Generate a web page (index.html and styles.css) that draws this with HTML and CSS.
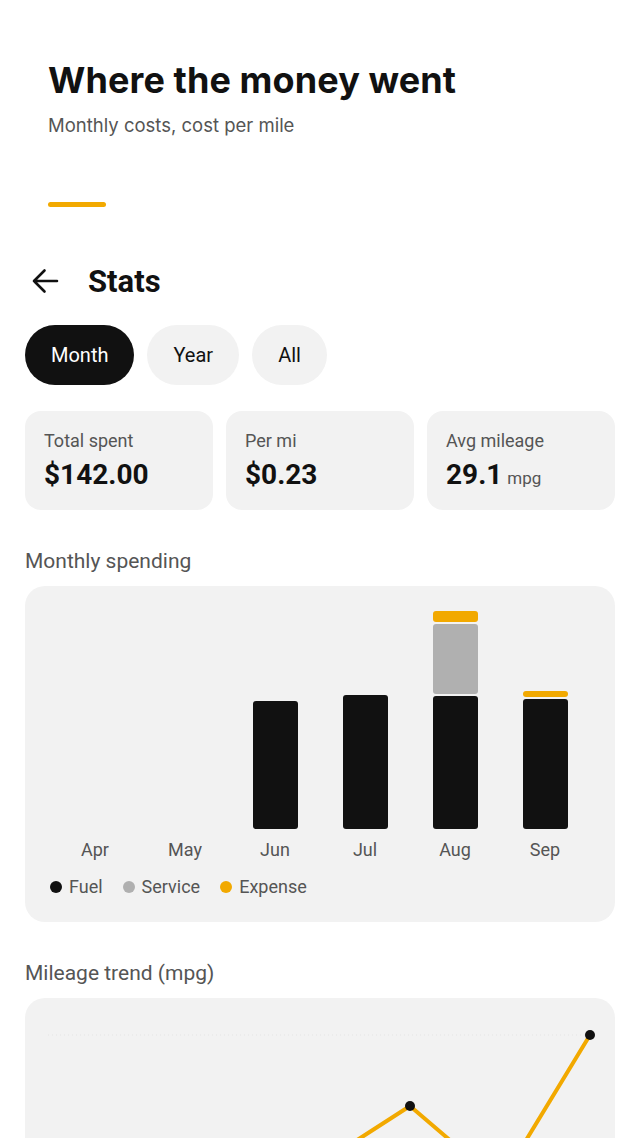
FILE: index.html
```html
<!DOCTYPE html>
<html lang="en">
    <head>
        <meta charset="UTF-8">
        <meta name="viewport" content="width=device-width, initial-scale=1.0">
        <title>Stats</title>
        <link rel="stylesheet" href="styles.css">
    </head>

    <body>
        <header class="intro">
            <h1>Where the money went</h1>
            <p class="subtitle">Monthly costs, cost per mile</p>
            <div class="accent"></div>
        </header>

        <main class="screen">
            <div class="topbar">
                <svg class="back" width="28" height="26" viewBox="0 0 28 26">
                    <path d="M26 13H3M13.5 2.5L3 13l10.5 10.5" fill="none" stroke="#111" stroke-width="2.6" stroke-linecap="round" stroke-linejoin="round"/>
                </svg>
                <h2>Stats</h2>
            </div>

            <div class="chips">
                <span class="chip active">Month</span>
                <span class="chip">Year</span>
                <span class="chip">All</span>
            </div>

            <div class="stats">
                <div class="stat">
                    <span class="label">Total spent</span>
                    <span class="value">$142.00</span>
                </div>
                <div class="stat">
                    <span class="label">Per mi</span>
                    <span class="value">$0.23</span>
                </div>
                <div class="stat">
                    <span class="label">Avg mileage</span>
                    <span class="value">29.1<small>mpg</small></span>
                </div>
            </div>

            <h3 class="section-title">Monthly spending</h3>
            <div class="card chart">
                <div class="bars">
                    <div class="col"><div class="stack"></div><span>Apr</span></div>
                    <div class="col"><div class="stack"></div><span>May</span></div>
                    <div class="col">
                        <div class="stack">
                            <div class="seg fuel" style="height: 128px"></div>
                        </div>
                        <span>Jun</span>
                    </div>
                    <div class="col">
                        <div class="stack">
                            <div class="seg fuel" style="height: 134px"></div>
                        </div>
                        <span>Jul</span>
                    </div>
                    <div class="col">
                        <div class="stack">
                            <div class="seg expense" style="height: 11px"></div>
                            <div class="seg service" style="height: 70px"></div>
                            <div class="seg fuel" style="height: 134px"></div>
                        </div>
                        <span>Aug</span>
                    </div>
                    <div class="col">
                        <div class="stack">
                            <div class="seg expense" style="height: 6px"></div>
                            <div class="seg fuel" style="height: 130px"></div>
                        </div>
                        <span>Sep</span>
                    </div>
                </div>
                <div class="legend">
                    <span><i class="dot fuel"></i>Fuel</span>
                    <span><i class="dot service"></i>Service</span>
                    <span><i class="dot expense"></i>Expense</span>
                </div>
            </div>

            <h3 class="section-title">Mileage trend (mpg)</h3>
            <div class="card trend">
                <svg width="590" height="260" viewBox="0 0 590 260">
                    <line x1="23" y1="37" x2="565" y2="37" stroke="#e4e4e4" stroke-width="1" stroke-dasharray="1 3"/>
                    <polyline points="115,210 205,190 295,166 385,108 475,185 565,37" fill="none" stroke="#f2a900" stroke-width="4" stroke-linejoin="round"/>
                    <circle cx="385" cy="108" r="5" fill="#111"/>
                    <circle cx="565" cy="37" r="5" fill="#111"/>
                    <circle cx="475" cy="185" r="5" fill="#111"/>
                </svg>
            </div>
        </main>
    </body>
</html>
```

FILE: styles.css
```css
body {
    margin: 0;
    background-color: #ffffff;
    color: #111111;
    font-family: Roboto, "Noto Sans", sans-serif;
}

.intro {
    padding: 58px 48px 0;
}

.intro h1 {
    margin: 0;
    font-family: Inter, Roboto, sans-serif;
    font-size: 36px;
    line-height: 44px;
    font-weight: 700;
    letter-spacing: 0.1px;
}

.subtitle {
    margin: 11px 0 0;
    font-family: Inter, Roboto, sans-serif;
    font-size: 18.5px;
    line-height: 24px;
    color: #555555;
}

.accent {
    width: 58px;
    height: 5px;
    margin-top: 65px;
    border-radius: 3px;
    background-color: #f2a900;
}

.screen {
    padding: 0 25px;
}

.topbar {
    display: flex;
    align-items: center;
    height: 48px;
    margin-top: 50px;
}

.back {
    margin-left: 6px;
}

.topbar h2 {
    margin: 0 0 0 29px;
    font-size: 31px;
    font-weight: 700;
}

.chips {
    display: flex;
    gap: 13px;
    margin-top: 20px;
}

.chip {
    display: flex;
    align-items: center;
    height: 60px;
    padding: 0 26px;
    border-radius: 30px;
    background-color: #f2f2f2;
    font-size: 20px;
    font-weight: 400;
}

.chip.active {
    background-color: #111111;
    color: #ffffff;
}

.stats {
    display: grid;
    grid-template-columns: repeat(3, 1fr);
    gap: 13px;
    margin-top: 26px;
}

.stat {
    display: flex;
    flex-direction: column;
    gap: 7px;
    height: 99px;
    padding: 19px 19px 0;
    box-sizing: border-box;
    border-radius: 16px;
    background-color: #f2f2f2;
}

.label {
    font-size: 18px;
    color: #555555;
}

.value {
    font-size: 28px;
    font-weight: 700;
}

.value small {
    margin-left: 5px;
    font-size: 17px;
    font-weight: 400;
    color: #555555;
}

.section-title {
    margin: 39px 0 13px;
    font-size: 21px;
    line-height: 24px;
    font-weight: 400;
    color: #555555;
}

.card {
    border-radius: 20px;
    background-color: #f2f2f2;
}

.chart {
    height: 336px;
    padding: 25px;
    box-sizing: border-box;
}

.bars {
    display: flex;
}

.col {
    flex: 1;
    display: flex;
    flex-direction: column;
    align-items: center;
}

.stack {
    display: flex;
    flex-direction: column;
    justify-content: flex-end;
    gap: 2px;
    width: 45px;
    height: 218px;
}

.seg {
    border-radius: 3px;
}

.fuel {
    background-color: #111111;
}

.service {
    background-color: #b0b0b0;
}

.expense {
    background-color: #f2a900;
}

.col span {
    margin-top: 10px;
    font-size: 18px;
    line-height: 22px;
    color: #555555;
}

.legend {
    display: flex;
    gap: 20px;
    margin-top: 15px;
    font-size: 18px;
    line-height: 22px;
    color: #555555;
}

.legend span {
    display: flex;
    align-items: center;
}

.dot {
    width: 12px;
    height: 12px;
    margin-right: 7px;
    border-radius: 50%;
}

.trend {
    height: 260px;
    overflow: hidden;
}

.trend svg {
    display: block;
}
```
